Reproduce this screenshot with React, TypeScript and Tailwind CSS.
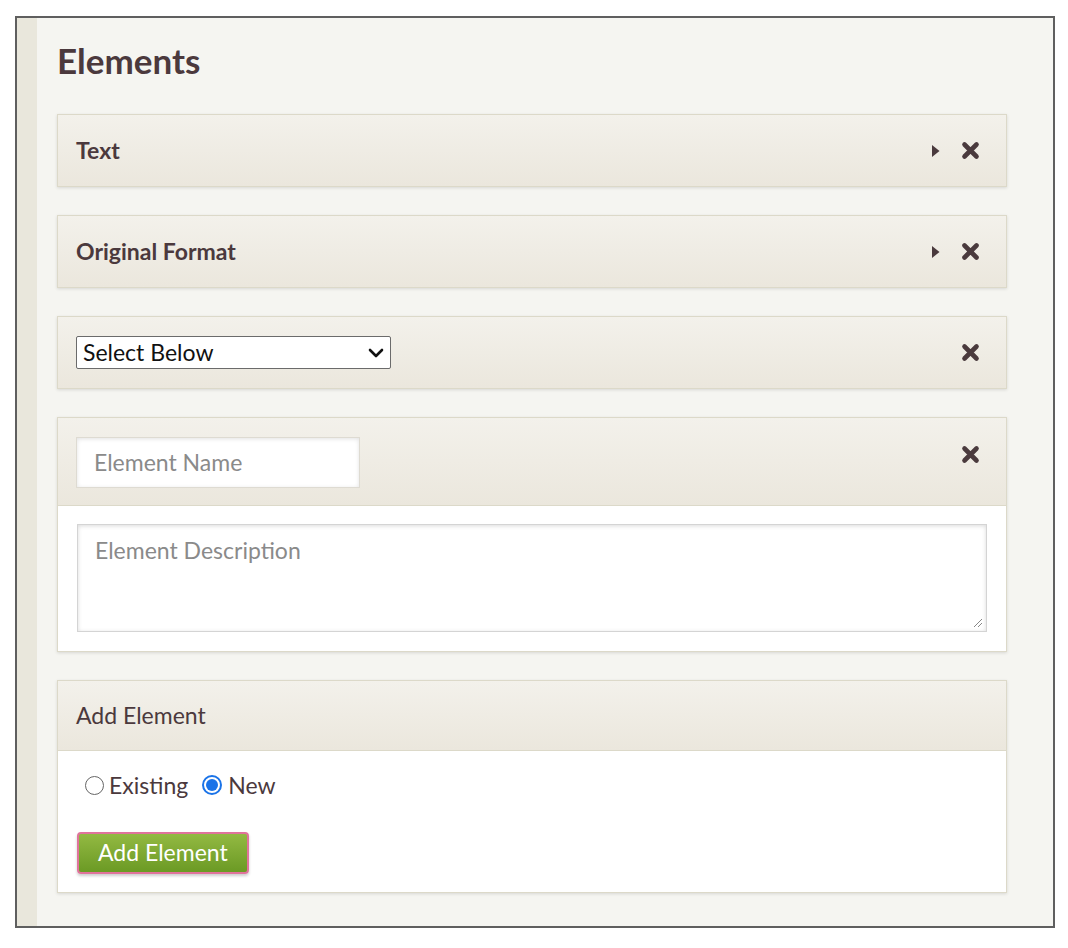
import { ReactNode } from "react";

const font = { fontFamily: "Lato, 'Open Sans', sans-serif" };

function CloseIcon() {
  return (
    <svg width="19" height="19" viewBox="0 0 19 19" className="shrink-0">
      <path d="M3.5 3.5 L15.5 15.5 M15.5 3.5 L3.5 15.5" stroke="#4a3a3d" strokeWidth="4.6" strokeLinecap="round" />
    </svg>
  );
}

function Caret() {
  return (
    <svg width="9" height="14" viewBox="0 0 9 14" className="shrink-0">
      <path d="M1 1 L8.5 7 L1 13 Z" fill="#4a3a3d" />
    </svg>
  );
}

function Card({ children, body }: { children: ReactNode; body?: ReactNode }) {
  return (
    <div className="border border-[#dcd9c9] shadow-[0_1px_3px_rgba(0,0,0,0.12)]">
      <div className="bg-gradient-to-b from-[#f3f1eb] to-[#ebe7dd] px-[18px]">{children}</div>
      {body && <div className="bg-white border-t border-[#dcd9c9]">{body}</div>}
    </div>
  );
}

export default function App() {
  return (
    <div className="w-[1068px] h-[948px] bg-white pt-4 pl-[15px]" style={font}>
      <div className="w-[1040px] h-[912px] border-2 border-[#5f5f5f] flex bg-[#f5f5f1]">
        <div className="w-5 bg-[#e9e7dc]" />
        <div className="flex-1 pl-5 pr-[46px]">
          <h1 className="text-[35px] font-bold text-[#4b393d] mt-[18px] leading-[48px]">Elements</h1>
          <div className="mt-[30px] flex flex-col gap-[28px]">
            <Card>
              <div className="h-[71px] flex items-center text-[23px] font-bold text-[#4b393d]">
                <span className="flex-1">Text</span>
                <div className="flex items-center gap-[21px] pr-[8px]">
                  <Caret />
                  <CloseIcon />
                </div>
              </div>
            </Card>
            <Card>
              <div className="h-[71px] flex items-center text-[23px] font-bold text-[#4b393d]">
                <span className="flex-1">Original Format</span>
                <div className="flex items-center gap-[21px] pr-[8px]">
                  <Caret />
                  <CloseIcon />
                </div>
              </div>
            </Card>
            <Card>
              <div className="h-[71px] flex items-center">
                <div className="flex-1">
                  <div className="w-[315px] h-[33px] bg-white border border-[#6b6b6b] rounded-[2px] flex items-center px-[6px] text-[23px] text-[#111]">
                    <span className="flex-1">Select Below</span>
                    <svg width="16" height="12" viewBox="0 0 16 12">
                      <path d="M2 3 L8 9 L14 3" stroke="#111" strokeWidth="2.6" fill="none" strokeLinecap="round" strokeLinejoin="round" />
                    </svg>
                  </div>
                </div>
                <div className="pr-[8px]">
                  <CloseIcon />
                </div>
              </div>
            </Card>
            <Card
              body={
                <div className="px-[19px] pt-[18px] pb-[19px]">
                  <div className="relative h-[108px] border border-[#d4d4d4] shadow-[inset_0_1px_4px_rgba(0,0,0,0.15)] bg-white px-[17px] pt-[8px] text-[23px] text-[#8a8a8a]">
                    Element Description
                    <svg width="10" height="10" viewBox="0 0 10 10" className="absolute right-[3px] bottom-[3px]">
                      <path d="M9 1 L1 9 M9 5 L5 9" stroke="#888" strokeWidth="1" />
                    </svg>
                  </div>
                </div>
              }
            >
              <div className="h-[87px] flex pt-[19px]">
                <div className="flex-1">
                  <div className="w-[284px] h-[51px] bg-white border border-[#dedbd2] shadow-[inset_0_1px_4px_rgba(0,0,0,0.12)] flex items-center px-[17px] text-[23px] text-[#8a8a8a]">
                    Element Name
                  </div>
                </div>
                <div className="pr-[8px] pt-[8px]">
                  <CloseIcon />
                </div>
              </div>
            </Card>
            <Card
              body={
                <div className="px-[19px] pt-[17px] pb-[18px] text-[23px] text-[#4b393d]">
                  <div className="flex items-center pl-[8px]">
                    <span className="w-[19px] h-[19px] rounded-full border border-[#666] bg-white" />
                    <span className="ml-[5px]">Existing</span>
                    <span className="ml-[14px] w-[20px] h-[20px] rounded-full border-2 border-[#1a73e8] bg-white flex items-center justify-center">
                      <span className="w-[12px] h-[12px] rounded-full bg-[#1a73e8]" />
                    </span>
                    <span className="ml-[6px]">New</span>
                  </div>
                  <button className="mt-[29px] h-[42px] px-[19px] rounded-[4px] border-2 border-[#e0739b] bg-gradient-to-b from-[#93b942] to-[#6b9a24] text-white text-[23px] leading-none shadow-[0_2px_3px_rgba(0,0,0,0.2)]">
                    Add Element
                  </button>
                </div>
              }
            >
              <div className="h-[69px] flex items-center text-[23px] text-[#4b393d]">Add Element</div>
            </Card>
          </div>
        </div>
      </div>
    </div>
  );
}
